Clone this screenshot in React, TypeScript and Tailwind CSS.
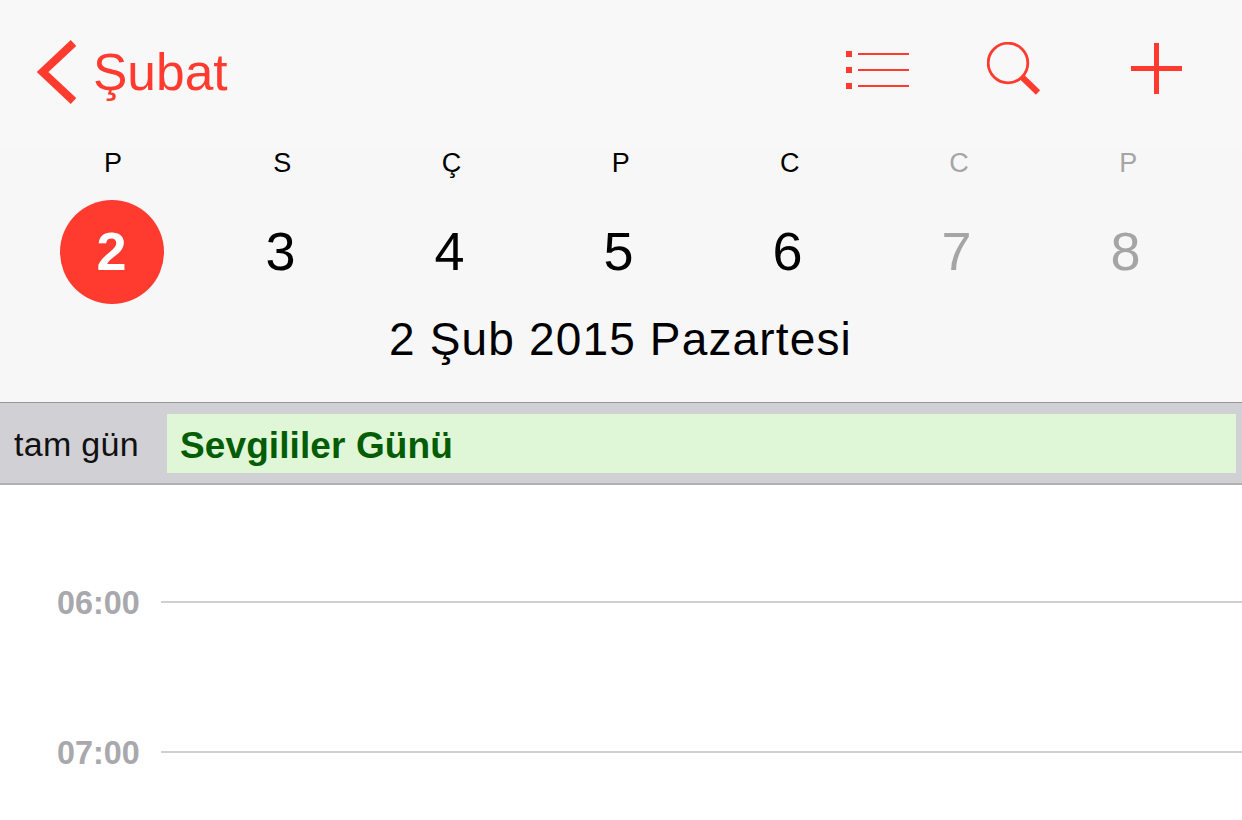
import React from "react";

const letters = [
  { label: "P", dim: false },
  { label: "S", dim: false },
  { label: "Ç", dim: false },
  { label: "P", dim: false },
  { label: "C", dim: false },
  { label: "C", dim: true },
  { label: "P", dim: true },
];

const days = [
  { label: "2", dim: false, today: true },
  { label: "3", dim: false, today: false },
  { label: "4", dim: false, today: false },
  { label: "5", dim: false, today: false },
  { label: "6", dim: false, today: false },
  { label: "7", dim: true, today: false },
  { label: "8", dim: true, today: false },
];

const hours = ["06:00", "07:00"];

const BackIcon = () => (
  <svg width="40" height="64" viewBox="0 0 40 64" className="shrink-0">
    <path d="M36.5 3 L5.5 32 L36.5 61" fill="none" stroke="#ff3b30" strokeWidth="8" />
  </svg>
);

const ListIcon = () => (
  <svg width="64" height="40" viewBox="0 0 64 40" className="shrink-0">
    <g fill="#ff3b30">
      <rect x="0" y="0" width="6" height="6" />
      <rect x="0" y="16" width="6" height="6" />
      <rect x="0" y="32" width="6" height="6" />
      <rect x="12" y="2" width="51" height="2" />
      <rect x="12" y="18" width="51" height="2" />
      <rect x="12" y="34" width="51" height="2" />
    </g>
  </svg>
);

const SearchIcon = () => (
  <svg width="55" height="53" viewBox="0 0 55 53" className="shrink-0">
    <circle cx="21" cy="21" r="19.8" fill="none" stroke="#ff3b30" strokeWidth="2.8" />
    <path d="M35 35 L51 50.5" fill="none" stroke="#ff3b30" strokeWidth="6" />
  </svg>
);

const PlusIcon = () => (
  <svg width="51" height="51" viewBox="0 0 51 51" className="shrink-0">
    <rect x="23" y="0" width="5" height="51" fill="#ff3b30" />
    <rect x="0" y="23" width="51" height="5" fill="#ff3b30" />
  </svg>
);

export default function App() {
  return (
    <div className="h-[820px] w-[1242px] overflow-hidden bg-white font-['Liberation_Sans',Arial,sans-serif]">
      <div className="h-[402px] bg-[#f7f7f7]">
        <div className="flex h-[146px] items-start bg-[#f8f8f8] pl-[37px]">
          <div className="mt-[40px]">
            <BackIcon />
          </div>
          <span className="ml-[16px] mt-[43px] text-[51.5px] leading-[59px] text-[#ff3b30]">Şubat</span>
          <div className="ml-auto mt-[51px]">
            <ListIcon />
          </div>
          <div className="ml-[77px] mt-[42px]">
            <SearchIcon />
          </div>
          <div className="ml-[89px] mr-[60px] mt-[43px]">
            <PlusIcon />
          </div>
        </div>

        <div className="grid grid-cols-[repeat(7,169.2px)] pl-[28.5px]">
          {letters.map((l, i) => (
            <div
              key={i}
              className={`h-[34px] text-center text-[27px] leading-[34px] ${l.dim ? "text-[#a5a5a5]" : "text-black"}`}
            >
              {l.label}
            </div>
          ))}
        </div>

        <div className="mt-[20px] grid grid-cols-[repeat(7,169px)] pl-[27px]">
          {days.map((d) => (
            <div key={d.label} className="flex h-[104px] items-center justify-center">
              {d.today ? (
                <div className="flex h-[104px] w-[104px] shrink-0 items-center justify-center rounded-full bg-[#ff3b30] pb-[2px] text-[54px] font-bold text-white">
                  {d.label}
                </div>
              ) : (
                <span className={`pb-[2px] text-[54px] ${d.dim ? "text-[#a5a5a5]" : "text-black"}`}>{d.label}</span>
              )}
            </div>
          ))}
        </div>

        <div className="mt-[10px] pr-[1px] text-center text-[46px] leading-[50px] tracking-[1.15px] text-black">
          2 Şub 2015 Pazartesi
        </div>
      </div>

      <div className="flex h-[83px] items-start border-t border-b-2 border-t-[#969696] border-b-[#b0b0b0] bg-[#d1d0d5] pt-[11px]">
        <span className="ml-[14px] mt-[10px] w-[153px] shrink-0 text-[34px] leading-[40px] tracking-[0.3px] text-[#111]">
          tam gün
        </span>
        <div className="mr-[6px] h-[59px] flex-1 bg-[#e0f7d7] pl-[13px] pt-[9px] text-[37px] font-bold leading-[46px] tracking-[0.1px] text-[#045d04]">
          Sevgililer Günü
        </div>
      </div>

      <div className="pt-[100px]">
        {hours.map((h) => (
          <div key={h} className="flex h-[150px] items-start">
            <span className="ml-[57px] w-[104px] shrink-0 text-[32.3px] font-bold leading-[36px] text-[#a8a8ad]">
              {h}
            </span>
            <div className="mt-[16px] h-[2px] flex-1 bg-[#d0d0d0]" />
          </div>
        ))}
      </div>
    </div>
  );
}
